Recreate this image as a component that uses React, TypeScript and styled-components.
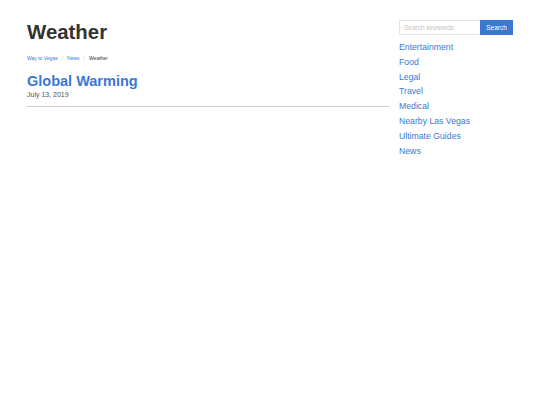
import styled, { createGlobalStyle } from 'styled-components'

const Global = createGlobalStyle`
  body {
    margin: 0;
    background: #fff;
    font-family: "Liberation Sans", Arial, sans-serif;
    color: #333;
  }
`

const Page = styled.div`
  display: flex;
  gap: 10px;
  padding: 20px 27px 0 27px;
`

const Main = styled.main`
  flex: 0 0 362px;
`

const Title = styled.h1`
  margin: 0;
  font-size: 20.4px;
  font-weight: bold;
  line-height: 24px;
  color: #333;
`

const Crumbs = styled.nav`
  display: flex;
  align-items: center;
  gap: 4px;
  margin-top: 10px;
  font-size: 5px;
  line-height: 8px;
`

const Crumb = styled.a<{ current?: boolean }>`
  color: ${(p) => (p.current ? '#333' : '#3a78d4')};
  text-decoration: none;
`

const Sep = styled.span`
  color: #bbb;
`

const PostTitle = styled.h2`
  margin: 11px 0 0;
  font-size: 14.5px;
  line-height: 17px;
  font-weight: bold;
  color: #3a78d4;
`

const Date = styled.div`
  font-size: 7px;
  line-height: 10px;
  font-weight: normal;
  color: #555;
`

const Rule = styled.hr`
  margin: 6px 0 0;
  border: 0;
  border-top: 1px solid #ccc;
`

const Side = styled.aside`
  width: 114px;
`

const Search = styled.form`
  display: flex;
  height: 15px;
`

const Input = styled.input`
  flex: 1;
  min-width: 0;
  box-sizing: border-box;
  border: 1px solid #e3e3e3;
  border-right: 0;
  padding: 0 4px;
  font-size: 6.5px;
  font-family: inherit;
  &::placeholder {
    color: #c4c4c4;
  }
`

const Button = styled.button`
  width: 33px;
  border: 0;
  background: #3a78d4;
  color: #fff;
  font-size: 6.5px;
  font-family: inherit;
  padding: 0;
`

const Links = styled.ul`
  list-style: none;
  margin: 5px 0 0;
  padding: 0;
`

const LinkItem = styled.li`
  font-size: 8.7px;
  line-height: 14.8px;
  a {
    color: #3a78d4;
    text-decoration: none;
  }
`

const categories = [
  'Entertainment',
  'Food',
  'Legal',
  'Travel',
  'Medical',
  'Nearby Las Vegas',
  'Ultimate Guides',
  'News',
]

export default function App() {
  return (
    <>
      <Global />
      <Page>
        <Main>
          <Title>Weather</Title>
          <Crumbs>
            <Crumb href="#">Way to Vegas</Crumb>
            <Sep>/</Sep>
            <Crumb href="#">News</Crumb>
            <Sep>/</Sep>
            <Crumb current>Weather</Crumb>
          </Crumbs>
          <PostTitle>Global Warming</PostTitle>
          <Date>July 13, 2019</Date>
          <Rule />
        </Main>
        <Side>
          <Search onSubmit={(e) => e.preventDefault()}>
            <Input placeholder="Search keywords" />
            <Button>Search</Button>
          </Search>
          <Links>
            {categories.map((c) => (
              <LinkItem key={c}>
                <a href="#">{c}</a>
              </LinkItem>
            ))}
          </Links>
        </Side>
      </Page>
    </>
  )
}
